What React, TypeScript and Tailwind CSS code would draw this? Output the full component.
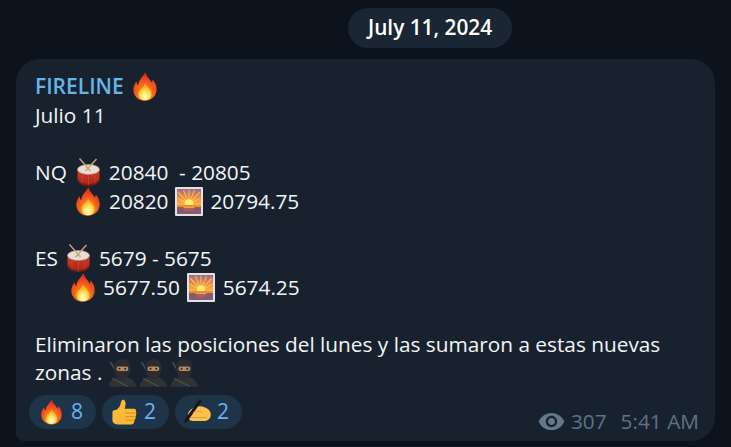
import {useId} from 'react';
import type {ReactNode} from 'react';

// Inline emoji drawings; no emoji font in the sandbox.
function Fire({w = 24, h = 29}: {w?: number; h?: number}) {
  const id = useId();
  return (
    <svg width={w} height={h} viewBox="0 0 24 29" className="inline-block shrink-0 align-[-7px]">
      <defs>
        <radialGradient id={id + 'o'} cx="50%" cy="78%" r="72%">
          <stop offset="0" stopColor="#ffb01a" />
          <stop offset="0.5" stopColor="#f8661c" />
          <stop offset="1" stopColor="#dc2a1c" />
        </radialGradient>
        <radialGradient id={id + 'i'} cx="50%" cy="78%" r="62%">
          <stop offset="0" stopColor="#fffef0" />
          <stop offset="0.45" stopColor="#ffe860" />
          <stop offset="1" stopColor="#ffaa1f" />
        </radialGradient>
      </defs>
      <path
        d="M12.5 0.3C13.5 5 16.5 6.5 18.6 10.5C19.5 9.6 19.7 8.5 19.5 7.3C22.3 10.2 23.8 13.8 23.7 17.5C23.5 24 18.5 28.7 12 28.7C5.5 28.7 0.5 24.2 0.3 18C0.2 14.5 1.7 11.4 3.7 9.2C3.7 10.8 4.2 12.2 5.3 13.1C5.5 8 9.5 5 12.5 0.3Z"
        fill={`url(#${id}o)`}
      />
      <path
        d="M12.2 11.5C13 14.5 18.6 17 18.6 22C18.6 25.8 15.8 28.2 12 28.2C8.2 28.2 5.4 25.8 5.4 22.2C5.4 18 10.5 15.8 12.2 11.5Z"
        fill={`url(#${id}i)`}
      />
    </svg>
  );
}

function Drum() {
  const id = useId();
  return (
    <svg width="23" height="28" viewBox="0 0 23 28" className="inline-block shrink-0 align-[-6px]">
      <defs>
        <linearGradient id={id} x1="0" y1="0" x2="0" y2="1">
          <stop offset="0" stopColor="#d83c26" />
          <stop offset="1" stopColor="#a32518" />
        </linearGradient>
      </defs>
      <path d="M0.5 11V21C0.5 25 5.5 27.7 11.5 27.7C17.5 27.7 22.5 25 22.5 21V11Z" fill={`url(#${id})`} />
      <path d="M0.5 21C3 25 7.5 26 11.5 26C15.5 26 20 25 22.5 21V21.5C22.5 25 17.5 27.7 11.5 27.7C5.5 27.7 0.5 25 0.5 21.5Z" fill="#7a1b12" />
      <path d="M5 17V25.5M11.5 18V27M18 17V25.5" stroke="#e79a82" strokeWidth="0.4" opacity="0.5" />
      <ellipse cx="11.5" cy="11.5" rx="11" ry="5" fill="#e6dfd6" stroke="#c0897a" strokeWidth="0.6" />
      <path d="M2.5 0.5L13.5 13M19.5 1L8.5 13" stroke="#c8a672" strokeWidth="1.4" fill="none" />
    </svg>
  );
}

function Sunrise() {
  const id = useId();
  return (
    <svg width="28" height="29" viewBox="0 0 28 29" className="inline-block shrink-0 align-[-7px]">
      <defs>
        <linearGradient id={id} x1="0" y1="0" x2="0" y2="1">
          <stop offset="0" stopColor="#9c6a88" />
          <stop offset="0.35" stopColor="#ee8a45" />
          <stop offset="0.65" stopColor="#fdb934" />
        </linearGradient>
      </defs>
      <rect width="28" height="29" rx="1" fill="#dfe3e8" />
      <rect x="2" y="2" width="24" height="25" fill={`url(#${id})`} />
      <path d="M14 17L3 5M14 17L8.5 3M14 17V2.5M14 17L19.5 3M14 17L25 5M14 17L2.5 11M14 17L25.5 11" stroke="#ffcf62" strokeWidth="1.2" opacity="0.7" />
      <circle cx="14" cy="16.5" r="4.2" fill="#ffea6a" />
      <rect x="2" y="18" width="24" height="9" fill="#8c5a6c" />
      <rect x="2" y="18" width="24" height="2" fill="#ea8c3a" />
      <rect x="8.5" y="20" width="11" height="1.2" fill="#f0a23c" />
      <rect x="10" y="22.5" width="8" height="1" fill="#b9714f" />
    </svg>
  );
}

function Ninja() {
  return (
    <svg width="29" height="28" viewBox="0 0 29 28" className="inline-block shrink-0 align-[-7px]">
      <path d="M2.5 3L12 19" stroke="#44474c" strokeWidth="1.7" />
      <path d="M0.5 27.7C1.5 21 6.5 17.5 14 17.5C21.5 17.5 27 21 28 27.7Z" fill="#303236" />
      <path d="M4 19.5L20 27.5" stroke="#53565b" strokeWidth="1" />
      <path d="M6 9C6 3 9.5 0 14.3 0C19 0 22.6 3 22.6 9C22.6 14.5 19 20.5 14.3 20.5C9.5 20.5 6 14.5 6 9Z" fill="#2a2c30" />
      <rect x="8.5" y="7.5" width="11.8" height="4.5" rx="2" fill="#b78a60" />
      <circle cx="11.5" cy="9.8" r="1" fill="#2a2018" />
      <circle cx="17.2" cy="9.8" r="1" fill="#2a2018" />
    </svg>
  );
}

function ThumbsUp() {
  return (
    <svg width="26" height="26" viewBox="0 0 26 27" className="shrink-0">
      <path
        d="M1 14C1 12.5 2 11.5 3.5 11.5C6 11.5 8 9 9 6.5C9.8 4.2 9.8 2 11 1C13 0 14.8 2 14.7 5C14.6 7.2 14 9 13.7 10.2H23C25.2 10.2 26 12 25.6 14C26 15.5 25.8 17 25 18C25.5 19.5 25 21 23.8 22C24 24.5 22.6 26.4 20.3 26.4H8C4 26.4 1 25 1 22Z"
        fill="#fbb938"
      />
      <path d="M14.5 14.5H25.4M14.5 18.3H24.8M14.5 22H23.6" stroke="#d98e22" strokeWidth="1" fill="none" />
    </svg>
  );
}

function WritingHand() {
  return (
    <svg width="27" height="25" viewBox="0 0 27 25" className="shrink-0">
      <path
        d="M4 15C5 11 8.5 8.5 12 8C14.5 6.8 18 7 21 8.5C24.5 10 26.8 12 26.8 15.5C26.8 19.5 24 22 20 22H8.5C5.5 22 3.5 18.5 4 15Z"
        fill="#fbc04f"
      />
      <path d="M15.5 0L18 1.8L4 21.5L0.3 24.7L1 20.2Z" fill="#15171a" />
      <path d="M7 18.5H23M9 13.5C12 12.3 15 12.3 18.5 13.3" stroke="#d99a2e" strokeWidth="0.9" fill="none" />
      <path d="M9.5 14.5C12 12.5 15 12.8 17 14C14.5 16 11.5 16.5 9.5 14.5Z" fill="#fbc04f" />
    </svg>
  );
}

function Reaction({icon, count}: {icon: ReactNode; count: number}) {
  return (
    <div className="flex h-[34px] w-[67px] items-center justify-between rounded-full bg-[#1e3448] pr-[13px] pl-[9px]">
      {icon}
      <span className="text-[21px] leading-none text-[#6ab3f3]">{count}</span>
    </div>
  );
}

function Line({children}: {children?: ReactNode}) {
  return <div className="h-[28.6px] whitespace-pre leading-[28.6px]">{children}</div>;
}

export default function App() {
  return (
    <div className="h-[447px] w-[731px] overflow-hidden bg-[#0d131d] font-['Open_Sans',sans-serif] text-[20.8px] text-[#f3f5f6]">
      <div className="pt-2 pl-[348px]">
        <div className="flex h-10 w-[164px] items-center justify-center rounded-full bg-[#1a2633] font-semibold text-white">
          July 11, 2024
        </div>
      </div>
      <div className="mt-[11px] ml-4 h-[382px] w-[699px] rounded-[24px] rounded-bl-[8px] bg-[#18222e] pt-3 pr-4 pl-[19px]">
        <div className="h-[30px] whitespace-pre text-[21px] leading-[30px] font-semibold text-[#64b5e8]">
          FIRELINE
          <span className="ml-[9px]"><Fire /></span>
        </div>
        <Line>Julio 11</Line>
        <Line />
        <Line>
          NQ
          <span className="ml-[10px]"><Drum /></span>
          <span className="ml-[9px]">20840  - 20805</span>
        </Line>
        <Line>
          <span className="ml-[41px]"><Fire /></span>
          <span className="ml-[9px]">20820</span>
          <span className="ml-[7px]"><Sunrise /></span>
          <span className="ml-[7px]">20794.75</span>
        </Line>
        <Line />
        <Line>
          ES
          <span className="ml-[9px]"><Drum /></span>
          <span className="ml-[9px]">5679 - 5675</span>
        </Line>
        <Line>
          <span className="ml-[36px]"><Fire /></span>
          <span className="ml-[8px]">5677.50</span>
          <span className="ml-[7px]"><Sunrise /></span>
          <span className="ml-[8px]">5674.25</span>
        </Line>
        <Line />
        <Line>Eliminaron las posiciones del lunes y las sumaron a estas nuevas</Line>
        <Line>
          zonas . <Ninja />
          <span className="ml-[2px]"><Ninja /></span>
          <span className="ml-[2px]"><Ninja /></span>
        </Line>
        <div className="mt-2 -ml-[6px] flex items-start justify-between">
          <div className="flex gap-[6px]">
            <Reaction icon={<span className="ml-[3px] flex"><Fire w={21} h={26} /></span>} count={8} />
            <Reaction icon={<ThumbsUp />} count={2} />
            <Reaction icon={<WritingHand />} count={2} />
          </div>
          <div className="mt-[11px] flex items-center text-[#5f7385]">
            <svg width="27" height="19" viewBox="0 0 24 17" className="mr-[6px]">
              <path
                fillRule="evenodd"
                fill="#63788a"
                d="M12 0.8C6.7 0.8 2.3 4 0.5 8.5C2.3 13 6.7 16.2 12 16.2C17.3 16.2 21.7 13 23.5 8.5C21.7 4 17.3 0.8 12 0.8ZM12 13.6C9.2 13.6 6.9 11.3 6.9 8.5C6.9 5.7 9.2 3.4 12 3.4C14.8 3.4 17.1 5.7 17.1 8.5C17.1 11.3 14.8 13.6 12 13.6ZM12 5.4C10.3 5.4 8.9 6.8 8.9 8.5C8.9 10.2 10.3 11.6 12 11.6C13.7 11.6 15.1 10.2 15.1 8.5C15.1 6.8 13.7 5.4 12 5.4Z"
              />
            </svg>
            <span>307</span>
            <span className="ml-[14px]">5:41 AM</span>
          </div>
        </div>
      </div>
    </div>
  );
}
